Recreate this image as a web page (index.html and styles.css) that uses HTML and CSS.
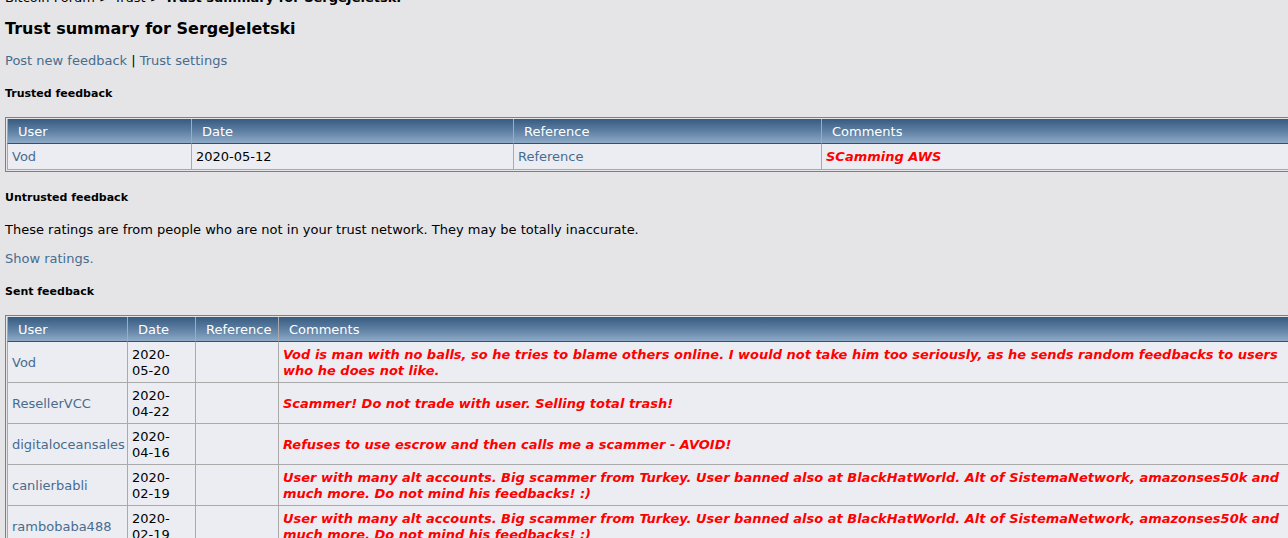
FILE: index.html
```html
<!DOCTYPE html>
<html lang="en">
<head>
<meta charset="UTF-8">
<title>Trust summary for SergeJeletski</title>
<link rel="stylesheet" href="styles.css">
</head>
<body>

<div class="linktree">
  <a href="#" class="nav">Bitcoin Forum</a> &gt; <a href="#" class="nav">Trust</a> &gt; <b>Trust summary for SergeJeletski</b>
</div>

<h2 class="title">Trust summary for SergeJeletski</h2>

<p class="links"><a href="#">Post new feedback</a> | <a href="#">Trust settings</a></p>

<h3 class="section first">Trusted feedback</h3>

<div class="tborder">
<table class="feedback trusted">
  <colgroup>
    <col class="c-user">
    <col class="c-date">
    <col class="c-ref">
    <col>
  </colgroup>
  <tr>
    <th>User</th>
    <th>Date</th>
    <th>Reference</th>
    <th>Comments</th>
  </tr>
  <tr>
    <td><a href="#">Vod</a></td>
    <td>2020-05-12</td>
    <td><a href="#">Reference</a></td>
    <td class="neg">SCamming AWS</td>
  </tr>
</table>
</div>

<h3 class="section untrusted">Untrusted feedback</h3>
<p class="note">These ratings are from people who are not in your trust network. They may be totally inaccurate.</p>
<p class="show"><a href="#">Show ratings.</a></p>

<h3 class="section sent">Sent feedback</h3>

<div class="tborder">
<table class="feedback sentlist">
  <colgroup>
    <col class="c-user">
    <col class="c-date">
    <col class="c-ref">
    <col>
  </colgroup>
  <tr>
    <th>User</th>
    <th>Date</th>
    <th>Reference</th>
    <th>Comments</th>
  </tr>
  <tr>
    <td><a href="#">Vod</a></td>
    <td class="date">2020-05-20</td>
    <td></td>
    <td class="neg">Vod is man with no balls, so he tries to blame others online. I would not take him too seriously, as he sends random feedbacks to users who he does not like.</td>
  </tr>
  <tr>
    <td><a href="#">ResellerVCC</a></td>
    <td class="date">2020-04-22</td>
    <td></td>
    <td class="neg">Scammer! Do not trade with user. Selling total trash!</td>
  </tr>
  <tr>
    <td><a href="#">digitaloceansales</a></td>
    <td class="date">2020-04-16</td>
    <td></td>
    <td class="neg">Refuses to use escrow and then calls me a scammer - AVOID!</td>
  </tr>
  <tr>
    <td><a href="#">canlierbabli</a></td>
    <td class="date">2020-02-19</td>
    <td></td>
    <td class="neg">User with many alt accounts. Big scammer from Turkey. User banned also at BlackHatWorld. Alt of SistemaNetwork, amazonses50k and much more. Do not mind his feedbacks! :)</td>
  </tr>
  <tr>
    <td><a href="#">rambobaba488</a></td>
    <td class="date">2020-02-19</td>
    <td></td>
    <td class="neg">User with many alt accounts. Big scammer from Turkey. User banned also at BlackHatWorld. Alt of SistemaNetwork, amazonses50k and much more. Do not mind his feedbacks! :)</td>
  </tr>
</table>
</div>

</body>
</html>
```

FILE: styles.css
```css
html {
  overflow: hidden;
}
body {
  margin: 0;
  padding: 0 5px;
  background-color: #e5e5e8;
  color: #000;
  font-family: Verdana, "DejaVu Sans", sans-serif;
  font-size: 13px;
  line-height: 16px;
}
a {
  color: #476c8e;
  text-decoration: none;
}
a.nav {
  color: #000;
}
.linktree {
  margin-top: -10px;
  white-space: nowrap;
}
.title {
  font-size: 16px;
  line-height: 20px;
  margin: 13px 0 0;
}
.links {
  margin: 14px 0 0;
}
.section {
  font-size: 11px;
  line-height: 14px;
  margin: 0;
}
.section.first {
  margin-top: 18px;
}
.section.untrusted {
  margin-top: 19px;
}
.section.sent {
  margin-top: 18px;
}
.note {
  margin: 17px 0 0;
}
.show {
  margin: 13px 0 0;
}
.tborder {
  width: 1290px;
  margin-top: 16px;
  border: 1px solid #7f7f7f;
  padding: 1px;
}
.feedback {
  width: 100%;
  table-layout: fixed;
  border-collapse: separate;
  border-spacing: 0;
  background-color: #ecedf3;
}
.feedback th {
  text-align: left;
  font-weight: normal;
  color: #fff;
  padding: 5px 10px 3px;
  background: linear-gradient(to bottom, #375b80 0%, #5d7fa2 50%, #8eaac7 100%);
  border-right: 1px solid #aaaaaa;
  border-bottom: 1px solid #34506e;
}
.feedback td {
  padding: 4px;
  vertical-align: middle;
  border-right: 1px solid #aaaaaa;
  border-bottom: 1px solid #aaaaaa;
}
.trusted td {
  padding-top: 5px;
}
.sentlist td {
  padding-top: 5px;
  padding-bottom: 3px;
}
.feedback td.date {
  padding-right: 6px;
}
.feedback td:first-child,
.feedback th:first-child {
  border-left: 1px solid #aaaaaa;
}
.trusted .c-user { width: 185px; }
.trusted .c-date { width: 322px; }
.trusted .c-ref { width: 308px; }
.sentlist .c-user { width: 121px; }
.sentlist .c-date { width: 68px; }
.sentlist .c-ref { width: 83px; }
.neg {
  color: #ff0000;
  font-weight: bold;
  font-style: italic;
}
```
